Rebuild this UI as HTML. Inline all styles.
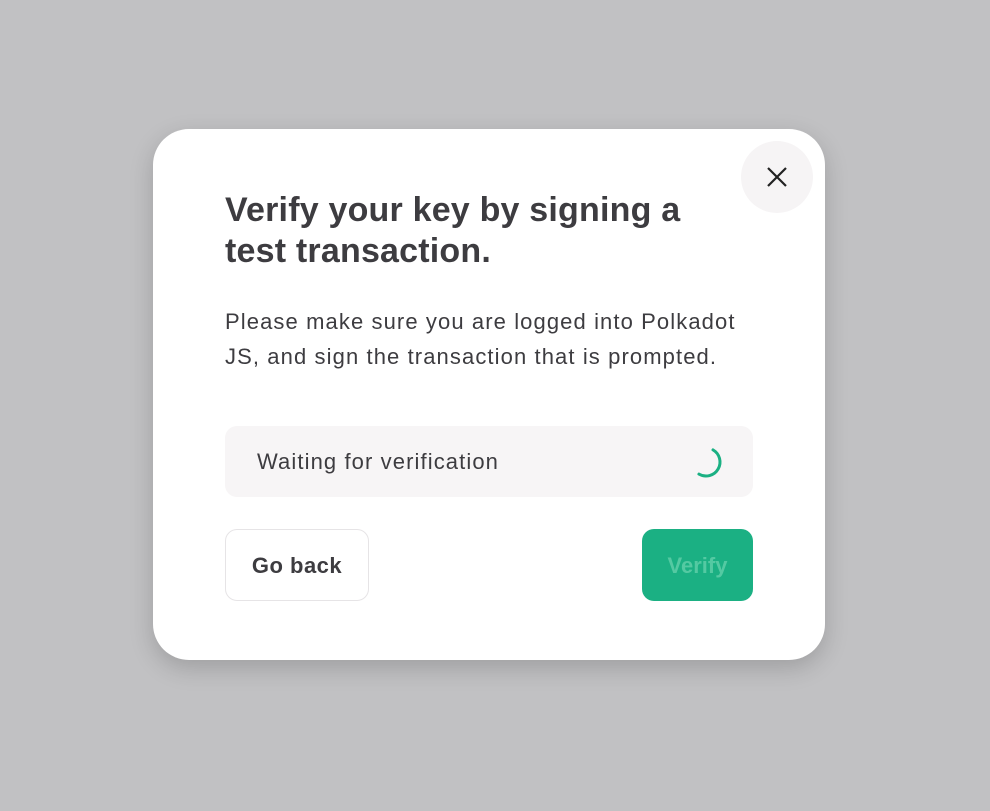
<!DOCTYPE html>
<html><head><meta charset="utf-8"><style>
body{margin:0;width:990px;height:811px;background:#c1c1c3;font-family:"Liberation Sans",sans-serif;position:relative;overflow:hidden}
.m{position:absolute;left:153px;top:129px;width:672px;height:531px;background:#fff;border-radius:36px;box-shadow:0 8px 24px rgba(0,0,0,.18)}
.x{position:absolute;left:588px;top:12px;width:72px;height:72px;border-radius:50%;background:#f6f4f5}
h1{position:absolute;left:72px;top:61px;margin:0;font-size:34px;line-height:41px;font-weight:bold;color:#3d3c40;letter-spacing:0.2px}
p{position:absolute;left:72px;top:175px;margin:0;font-size:22px;line-height:35px;color:#3d3c40;width:530px;letter-spacing:1.1px}
.w{position:absolute;left:72px;top:297px;width:528px;height:71px;background:#f7f5f6;border-radius:12px}
.w span{position:absolute;left:32px;top:23px;font-size:22px;color:#3d3c40;letter-spacing:1.1px}
.b1{position:absolute;left:72px;top:400px;width:142px;height:70px;border:1px solid #e6e4e6;border-radius:12px;font-size:22px;font-weight:bold;color:#3d3c40;line-height:72px;text-align:center;letter-spacing:0.5px}
.b2{position:absolute;left:489px;top:400px;width:111px;height:72px;background:#1bb083;border-radius:12px;font-size:22px;font-weight:bold;color:#54c9a2;line-height:74px;text-align:center}
</style></head><body>
<div class="m">
<div class="x"><svg width="72" height="72"><path d="M27 38 L45 56 M45 38 L27 56" transform="translate(0,-11)" stroke="#222" stroke-width="2.2" fill="none"/></svg></div>
<h1>Verify your key by signing a<br>test transaction.</h1>
<p>Please make sure you are logged into Polkadot JS, and sign the transaction that is prompted.</p>
<div class="w"><span>Waiting for verification</span>
<svg style="position:absolute;left:463px;top:18px" width="36" height="36"><circle cx="18" cy="18" r="14" fill="none" stroke="#1bb083" stroke-width="3" stroke-linecap="round" stroke-dasharray="44 100" transform="rotate(-60 18 18)"/></svg></div>
<div class="b1">Go back</div>
<div class="b2">Verify</div>
</div>
</body></html>
